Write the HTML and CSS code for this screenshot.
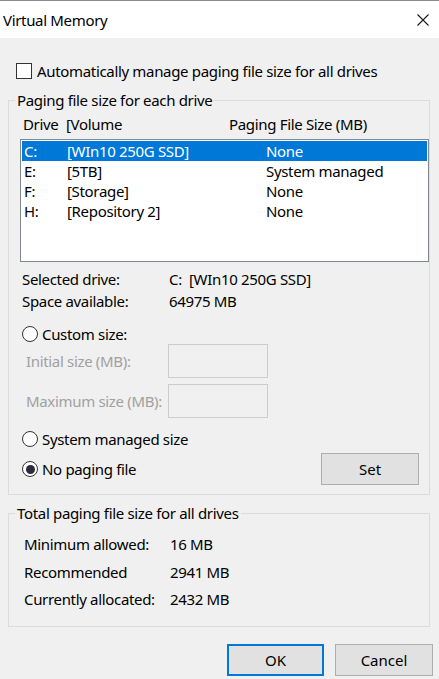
FILE: index.html
```html
<!DOCTYPE html>
<html lang="en">
<head>
<meta charset="utf-8">
<title>Virtual Memory</title>
<link rel="stylesheet" href="styles.css">
</head>
<body>
<div class="window">
  <div class="titlebar">
    <span class="title">Virtual Memory</span>
    <svg class="close" width="12" height="12" viewBox="0 0 12 12"><path d="M0.5 0.5 L11.5 11.5 M11.5 0.5 L0.5 11.5" stroke="#1a1a1a" stroke-width="1.1" fill="none"/></svg>
  </div>
  <div class="content">
    <label class="check-row"><span class="checkbox"></span><span>Automatically manage paging file size for all drives</span></label>

    <fieldset class="group group-drives">
      <legend>Paging file size for each drive</legend>
      <div class="list-head">
        <span class="c-drive">Drive</span><span class="c-vol">[Volume</span><span>Paging File Size (MB)</span>
      </div>
      <div class="listbox">
        <div class="row selected"><span class="r-drive">C:</span><span class="r-vol">[WIn10 250G SSD]</span><span>None</span></div>
        <div class="row"><span class="r-drive">E:</span><span class="r-vol">[5TB]</span><span>System managed</span></div>
        <div class="row"><span class="r-drive">F:</span><span class="r-vol">[Storage]</span><span>None</span></div>
        <div class="row"><span class="r-drive">H:</span><span class="r-vol">[Repository 2]</span><span>None</span></div>
      </div>
      <div class="info">
        <div class="info-row"><span class="info-label">Selected drive:</span><span class="sel-drive">C:</span><span>[WIn10 250G SSD]</span></div>
        <div class="info-row"><span class="info-label">Space available:</span><span>64975 MB</span></div>
      </div>
      <div class="radio-row radio-custom"><span class="radio"></span><span>Custom size:</span></div>
      <div class="size-row size-first"><span class="size-label">Initial size (MB):</span><span class="input"></span></div>
      <div class="size-row"><span class="size-label">Maximum size (MB):</span><span class="input"></span></div>
      <div class="radio-row radio-system"><span class="radio"></span><span>System managed size</span></div>
      <div class="bottom-row">
        <div class="radio-row"><span class="radio checked"></span><span>No paging file</span></div>
        <button class="btn btn-set">Set</button>
      </div>
    </fieldset>

    <fieldset class="group group-total">
      <legend>Total paging file size for all drives</legend>
      <div class="totals">
        <div class="total-row"><span class="total-label">Minimum allowed:</span><span>16 MB</span></div>
        <div class="total-row"><span class="total-label">Recommended</span><span>2941 MB</span></div>
        <div class="total-row"><span class="total-label">Currently allocated:</span><span>2432 MB</span></div>
      </div>
    </fieldset>

    <div class="buttons">
      <button class="btn btn-ok">OK</button>
      <button class="btn btn-cancel">Cancel</button>
    </div>
  </div>
</div>
</body>
</html>
```
FILE: styles.css
```css
* { box-sizing: border-box; }
html, body {
  margin: 0;
  padding: 0;
  background: #f0f0f0;
}
body {
  font-family: "Noto Sans", "Open Sans", sans-serif;
  font-size: 15px;
  line-height: 20px;
  letter-spacing: -0.33px;
  color: #000;
}
.window {
  width: 439px;
  height: 679px;
  overflow: hidden;
  background: #f0f0f0;
}
.titlebar {
  height: 38px;
  border-top: 1px solid #8c8c8c;
  background: #fff;
  display: flex;
  align-items: center;
  justify-content: space-between;
  padding: 0 10px 0 3px;
}
.title { color: #000; }
.close { display: block; margin-top: 1px; }

.content {
  padding: 23px 9px 0 8px;
}
.check-row {
  display: flex;
  align-items: center;
  height: 20px;
  padding-left: 8px;
  gap: 5px;
}
.checkbox {
  width: 16px;
  height: 16px;
  border: 1px solid #333;
  background: #fff;
  flex: none;
}

.group {
  margin: 9px 0 0 0;
  width: 422px;
  min-width: 0;
  border: 1px solid #dcdcdc;
  padding: 0 0 9px 0;
}
.group legend {
  margin-left: 6px;
  padding: 0 2px;
  line-height: 20px;
}
.group-total {
  margin-top: 8px;
  padding-bottom: 17px;
}

.list-head {
  display: flex;
  height: 20px;
  margin-top: 4px;
  padding-left: 14px;
}
.c-drive { width: 43px; }
.c-vol { width: 163px; }

.listbox {
  margin: 5px 0 0 11px;
  width: 409px;
  height: 123px;
  border: 1px solid #828790;
  background: #fff;
  padding: 1px;
}
.row {
  display: flex;
  height: 20px;
  padding-left: 2px;
  align-items: center;
}
.row.selected {
  background: #0078d7;
  color: #fff;
}
.r-drive { width: 43px; }
.r-vol { width: 199px; }

.info {
  margin-top: 7px;
  padding-left: 13px;
  display: flex;
  flex-direction: column;
  gap: 2px;
}
.info-row { display: flex; height: 20px; }
.info-label { width: 147px; }
.sel-drive { width: 20px; }

.radio-row {
  display: flex;
  align-items: center;
  height: 20px;
  gap: 4px;
  padding-left: 13px;
}
.radio {
  width: 16px;
  height: 16px;
  border-radius: 50%;
  border: 1px solid #333;
  background: #fff;
  flex: none;
  display: flex;
  align-items: center;
  justify-content: center;
}
.radio.checked::after {
  content: "";
  width: 9px;
  height: 9px;
  border-radius: 50%;
  background: #2b2b3a;
}
.radio-custom { margin-top: 13px; }
.radio-system { margin-top: 11px; }

.size-row {
  display: flex;
  align-items: center;
  padding-left: 17px;
  margin-top: 6px;
  color: #a0a0a0;
}
.size-row.size-first { margin-top: 0; }
.size-label { width: 142px; }
.input {
  width: 100px;
  height: 34px;
  border: 1px solid #cccccc;
  background: #f0f0f0;
}

.bottom-row {
  display: flex;
  align-items: center;
  justify-content: space-between;
  margin-top: 4px;
  padding-right: 10px;
}
.bottom-row .radio-row { padding-left: 13px; }

.btn {
  font: inherit;
  color: #000;
  background: #e1e1e1;
  border: 1px solid #adadad;
  height: 32px;
  padding: 0;
  margin: 0;
}
.btn-set { width: 98px; }
.btn-ok { width: 97px; border: 2px solid #0078d7; }
.btn-cancel { width: 98px; }

.totals {
  padding-top: 11px;
  padding-left: 15px;
  display: flex;
  flex-direction: column;
  gap: 7.5px;
}
.total-row { display: flex; height: 20px; }
.total-label { width: 146px; }

.buttons {
  display: flex;
  justify-content: flex-end;
  gap: 11px;
  margin-top: 17px;
  margin-right: -3px;
}
```
